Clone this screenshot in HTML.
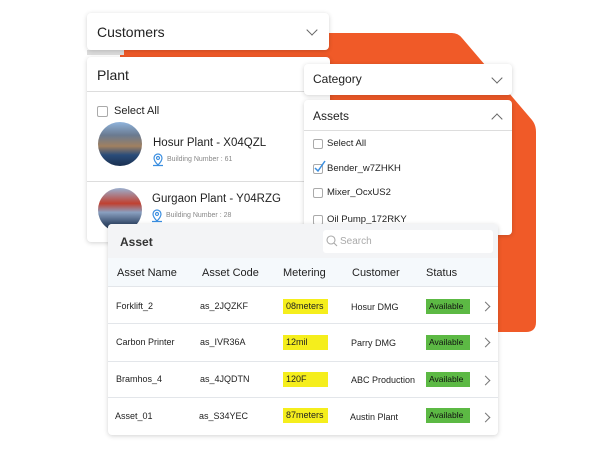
<!DOCTYPE html>
<html><head><meta charset="utf-8"><style>
*{box-sizing:border-box;margin:0;padding:0}
body{width:601px;height:450px;background:#fff;position:relative;overflow:hidden;font-family:"Liberation Sans",sans-serif;color:#222}
.box{position:absolute;background:#fff;border-radius:4px;box-shadow:0 1px 5px rgba(0,0,0,.18)}
.abs{position:absolute}
.chev{position:absolute;width:8px;height:8px;border-right:1.6px solid #666;border-bottom:1.6px solid #666;transform:rotate(45deg)}
.cb{position:absolute;width:11px;height:11px;border:1px solid #aaa;border-radius:2px;background:#fff}
.t{position:absolute;white-space:nowrap}
.y{position:absolute;background:#f5ee1c;height:15px;width:45px;font-size:9px;padding:2px 3px;overflow:hidden}
.g{position:absolute;background:#5cb944;height:15px;width:44px;font-size:8.5px;padding:2px 3px;color:#111;overflow:hidden}
.rc{position:absolute;width:7px;height:7px;border-right:1.5px solid #777;border-top:1.5px solid #777;transform:rotate(45deg)}
</style></head><body>
<svg class="abs" style="left:0;top:0" width="601" height="450"><path d="M120 33 L452 33 Q458 33 462 38 L532 120 Q536 125 536 132 L536 322 Q536 332 526 332 L120 332 Z" fill="#f05a28"/></svg>
<div class="abs" style="left:87px;top:50px;width:37px;height:5px;background:#ddd"></div>

<div class="box" style="left:87px;top:13px;width:242px;height:37px">
<div class="t" style="left:10px;top:11px;font-size:14px">Customers</div>
<div class="chev" style="left:221px;top:13px"></div></div>

<div class="box" style="left:87px;top:57px;width:243px;height:185px">
<div class="t" style="left:10px;top:10px;font-size:14px">Plant</div>
<div class="abs" style="left:0;top:34px;width:243px;height:1px;background:#ddd"></div>
<div class="cb" style="left:10px;top:49px"></div>
<div class="t" style="left:27px;top:48px;font-size:11px">Select All</div>
<div class="abs" style="left:11px;top:65px;width:44px;height:44px;border-radius:50%;background:linear-gradient(180deg,#8fb4dc 0,#6a7a90 30%,#a08060 55%,#2a4c7a 75%,#1a3050 100%)"></div>
<div class="t" style="left:66px;top:80px;font-size:11.5px">Hosur Plant - X04QZL</div>
<svg class="abs" style="left:65px;top:96px" width="12" height="14"><path d="M6 1a4 4 0 0 1 4 4c0 3-4 7-4 7S2 8 2 5a4 4 0 0 1 4-4z M6 3.5a1.5 1.5 0 1 0 .01 0 M1 12.5h10" fill="none" stroke="#3a8ee0" stroke-width="1.2"/></svg>
<div class="t" style="left:80px;top:99px;font-size:7px;color:#888">Building Number : 61</div>
<div class="abs" style="left:0;top:124px;width:243px;height:1px;background:#ddd"></div>
<div class="abs" style="left:11px;top:131px;width:44px;height:44px;border-radius:50%;background:linear-gradient(180deg,#9ab0d0 0,#c04030 35%,#8aa0c0 55%,#3a5070 80%,#203048 100%)"></div>
<div class="t" style="left:65px;top:136px;font-size:11.5px">Gurgaon Plant - Y04RZG</div>
<svg class="abs" style="left:64px;top:152px" width="12" height="14"><path d="M6 1a4 4 0 0 1 4 4c0 3-4 7-4 7S2 8 2 5a4 4 0 0 1 4-4z M6 3.5a1.5 1.5 0 1 0 .01 0 M1 12.5h10" fill="none" stroke="#3a8ee0" stroke-width="1.2"/></svg>
<div class="t" style="left:79px;top:155px;font-size:7px;color:#888">Building Number : 28</div>
</div>

<div class="box" style="left:304px;top:64px;width:208px;height:31px">
<div class="t" style="left:9px;top:8px;font-size:12px">Category</div>
<div class="chev" style="left:189px;top:10px"></div></div>

<div class="box" style="left:304px;top:100px;width:208px;height:135px">
<div class="t" style="left:9px;top:9px;font-size:12px">Assets</div>
<div class="chev" style="left:189px;top:15px;transform:rotate(225deg)"></div>
<div class="abs" style="left:0;top:30px;width:208px;height:1px;background:#ddd"></div>
<div class="cb" style="left:9px;top:39px;width:10px;height:10px"></div>
<div class="t" style="left:23px;top:38px;font-size:9.5px">Select All</div>
<div class="cb" style="left:9px;top:64px;width:10px;height:10px"></div>
<svg class="abs" style="left:9px;top:60px" width="14" height="14"><path d="M2 8l3 3 7-10" fill="none" stroke="#3a8ee0" stroke-width="1.5"/></svg>
<div class="t" style="left:23px;top:63px;font-size:9.5px">Bender_w7ZHKH</div>
<div class="cb" style="left:9px;top:88px;width:10px;height:10px"></div>
<div class="t" style="left:23px;top:87px;font-size:9.5px">Mixer_OcxUS2</div>
<div class="cb" style="left:9px;top:115px;width:10px;height:10px"></div>
<div class="t" style="left:23px;top:114px;font-size:9.5px">Oil Pump_172RKY</div>
</div>

<div class="box" style="left:108px;top:224px;width:390px;height:211px;overflow:hidden;z-index:0">
<div class="abs" style="left:0;top:0;width:390px;height:34px;background:#f3f4f6"></div>
<div class="t" style="left:12px;top:11px;font-size:12px;font-weight:bold;color:#333">Asset</div>
<div class="abs" style="left:215px;top:6px;width:170px;height:23px;background:#fff;border-radius:3px"></div>
<svg class="abs" style="left:218px;top:11px" width="12" height="12"><circle cx="5" cy="5" r="4" fill="none" stroke="#aaa" stroke-width="1.1"/><path d="M8 8l3 3" stroke="#aaa" stroke-width="1.1"/></svg>
<div class="t" style="left:232px;top:12px;font-size:10px;color:#aaa">Search</div>
<div class="abs" style="left:0;top:34px;width:390px;height:29px;background:#f5f9fc;border-bottom:1px solid #e3e6ea"></div>
<div class="t" style="left:9px;top:43px;font-size:11px">Asset Name</div>
<div class="t" style="left:94px;top:43px;font-size:11px">Asset Code</div>
<div class="t" style="left:175px;top:43px;font-size:11px">Metering</div>
<div class="t" style="left:244px;top:43px;font-size:11px">Customer</div>
<div class="t" style="left:318px;top:43px;font-size:11px">Status</div>

<div class="t" style="left:8px;top:77px;font-size:9px">Forklift_2</div>
<div class="t" style="left:92px;top:77px;font-size:9px">as_2JQZKF</div>
<div class="y" style="left:175px;top:75px">08meters</div>
<div class="t" style="left:243px;top:78px;font-size:9px">Hosur DMG</div>
<div class="g" style="left:318px;top:75px">Available</div>
<div class="rc" style="left:374px;top:79px"></div>
<div class="abs" style="left:0;top:99px;width:390px;height:1px;background:#e3e6ea"></div>

<div class="t" style="left:8px;top:113px;font-size:9px">Carbon Printer</div>
<div class="t" style="left:92px;top:113px;font-size:9px">as_IVR36A</div>
<div class="y" style="left:175px;top:111px">12mil</div>
<div class="t" style="left:243px;top:114px;font-size:9px">Parry DMG</div>
<div class="g" style="left:318px;top:111px">Available</div>
<div class="rc" style="left:374px;top:115px"></div>
<div class="abs" style="left:0;top:137px;width:390px;height:1px;background:#e3e6ea"></div>

<div class="t" style="left:8px;top:150px;font-size:9px">Bramhos_4</div>
<div class="t" style="left:92px;top:150px;font-size:9px">as_4JQDTN</div>
<div class="y" style="left:175px;top:148px">120F</div>
<div class="t" style="left:243px;top:151px;font-size:9px">ABC Production</div>
<div class="g" style="left:318px;top:148px">Available</div>
<div class="rc" style="left:374px;top:153px"></div>
<div class="abs" style="left:0;top:173px;width:390px;height:1px;background:#e3e6ea"></div>

<div class="t" style="left:7px;top:187px;font-size:9px">Asset_01</div>
<div class="t" style="left:91px;top:187px;font-size:9px">as_S34YEC</div>
<div class="y" style="left:175px;top:184px">87meters</div>
<div class="t" style="left:242px;top:188px;font-size:9px">Austin Plant</div>
<div class="g" style="left:318px;top:184px">Available</div>
<div class="rc" style="left:374px;top:190px"></div>
</div>
</body></html>
